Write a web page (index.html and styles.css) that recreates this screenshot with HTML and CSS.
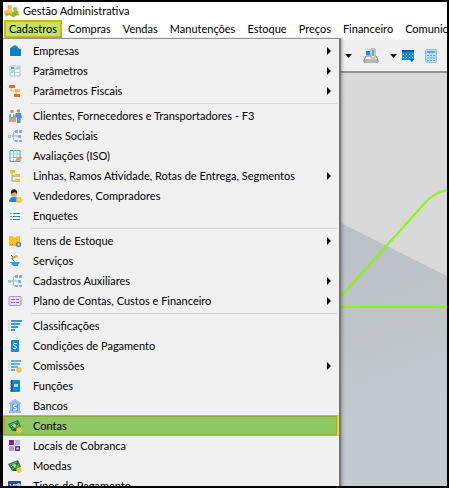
FILE: index.html
```html
<!DOCTYPE html>
<html lang="pt-BR">
<head>
<meta charset="utf-8">
<title>Gestão Administrativa</title>
<link rel="stylesheet" href="styles.css">
</head>
<body>
<div class="window">
  <header class="titlebar">
    <svg class="logo" viewBox="0 0 16 14" aria-hidden="true"><path d="m1 9 5-2 3 3 6-3v4l-5 3-4-3-4 2z" fill="#b3b52c"/><circle cx="6" cy="3" r="2.500" fill="#f0b25c"/><path d="m0 7 4-2h4l2 4-3 1-3-2-4 3z" fill="#f3c545"/><circle cx="12" cy="5" r="2.300" fill="#9bc34a"/><path d="m8 9 3-2h4l1 5-3-1-4 3z" fill="#8fba28"/></svg>
    <span>Gestão Administrativa</span>
  </header>
  <nav class="menubar">
    <button class="top open">Cadastros</button>
    <button class="top">Compras</button>
    <button class="top">Vendas</button>
    <button class="top">Manutenções</button>
    <button class="top">Estoque</button>
    <button class="top">Preços</button>
    <button class="top">Financeiro</button>
    <button class="top">Comunicação</button>
  </nav>
  <main class="workspace">
    <div class="toolbar">
      <button class="tool drop" aria-label="Opções"><svg width="7" height="4"><path d="M0 0h7L3.500 4z" fill="#111"/></svg></button>
      <button class="tool" aria-label="Caixa"><svg width="16" height="16" viewBox="0 0 16 16"><path d="M3 8h10l2 4v2H1v-2z" fill="#fff" stroke="#777"/><path d="M1 12h14" stroke="#777"/><path d="M8 1h4v9H8z" fill="#fff" stroke="#999"/><path d="M9 3h2M9 5h2M9 7h2" stroke="#333"/><path d="M3 3h4v4H3z" fill="#1494e8"/></svg></button>
      <button class="tool drop" aria-label="Opções da caixa"><svg width="7" height="4"><path d="M0 0h7L3.500 4z" fill="#111"/></svg></button>
      <button class="tool agenda" aria-label="Agenda"><svg width="12" height="13" viewBox="0 0 12 13"><path d="M0 1h12v10H0z" fill="#168ce0"/><path d="M0 1h12v2H0z" fill="#075e9f"/><path d="M1 5.500h10M1 8.500h10" stroke="#a8d8ff" stroke-dasharray="1 2"/><path d="M7 10h5l-2 3z" fill="#075e9f"/></svg></button>
      <button class="tool" aria-label="Calculadora"><svg width="12" height="14" viewBox="0 0 12 14"><rect x=".5" y=".5" width="11" height="13" rx="1" fill="#b9defa" stroke="#8cc2e8"/><path d="M2 2h8v2H2z" fill="#52aaea"/><path d="M2 6.500h8M2 9h8M2 11.500h8" stroke="#52aaea" stroke-dasharray="2 1"/></svg></button>
    </div>
    <svg class="backdrop" viewBox="0 0 444 413" preserveAspectRatio="xMinYMin slice" aria-hidden="true">
      <defs><linearGradient id="sky" x1="0" y1="0" x2=".4" y2="1"><stop offset="0" stop-color="#b5bec8"/><stop offset=".65" stop-color="#bac1c7"/><stop offset=".85" stop-color="#c0c4c8"/><stop offset="1" stop-color="#c3cacf"/></linearGradient></defs>
      <path d="M0 0h444v413H0z" fill="#d9d9d9"/>
      <path d="M0-19 444 203v210H0z" fill="url(#sky)"/>
      <path d="M332 230 421 131Q431 119 446 117M332 234h114" fill="none" stroke="#8af510" stroke-width="2"/>
    </svg>
  </main>
  <div class="popup">
    <ul class="group">
      <li><button class="item sub"><svg viewBox="0 0 14 14"><path d="M2 4 7 1l3 2v1l3 1v7H2z" fill="#1287d8"/><path d="M3 5h5M3 7h9M3 9h9M3 11h9" stroke="#0a5d9c" stroke-dasharray="1 1"/></svg>Empresas</button></li>
      <li><button class="item sub"><svg viewBox="0 0 14 14"><path d="M2 2h10v10H2z" fill="#fff" stroke="#9fc4dc"/><path d="M2 5h10M2 8.500h10M6.500 2v10" stroke="#b7d2e3"/><path d="M3 3h3v2H3z" fill="#46ac75"/><path d="M8 3h4v2H8zM3 6h3v2H3z" fill="#a6d7b8"/></svg>Parâmetros</button></li>
      <li><button class="item sub"><svg viewBox="0 0 14 14"><path d="M3 4v3h5v4" fill="none" stroke="#b9b9b9"/><path d="M1 1h6v3H1zM6 10h6v3H6z" fill="#ef6c28"/><path d="M7 5h5v3H7z" fill="#f4bd28"/></svg>Parâmetros Fiscais</button></li>
    </ul>
    <ul class="group">
      <li><button class="item"><svg viewBox="0 0 14 14"><circle cx="4" cy="2.500" r="1.800" fill="#c69265"/><circle cx="10.500" cy="2" r="1.800" fill="#c69265"/><path d="M1 5h5l2 3v5H1z" fill="#82b1b4"/><path d="M8 4h5l1 5h-1.500v5H9V9L7 7z" fill="#4f8fd5"/><path d="M3 9h5v4H3z" fill="#e29a75"/><path d="M3 5h2v3H3z" fill="#fff"/></svg>Clientes, Fornecedores e Transportadores - F3</button></li>
      <li><button class="item"><svg viewBox="0 0 14 14"><use href="#network"/></svg>Redes Sociais</button></li>
      <li><button class="item"><svg viewBox="0 0 14 14"><path d="M2 1.500h10v11H2z" fill="#fff" stroke="#46a5df"/><path d="M2 5h10M2 8.500h10M5.500 1v11M9 1v11" stroke="#8dc9ec"/><path d="m7 13 1-3 4-3 2 2-4 3z" fill="#ec9645"/></svg>Avaliações (ISO)</button></li>
      <li><button class="item sub"><svg viewBox="0 0 14 14"><path d="M4 3v9h5M4 7h5" fill="none" stroke="#8b9aab"/><path d="M2 1h5v3H2zM7 5h5v3H7zM7 10h5v3H7z" fill="#efc02d"/></svg>Linhas, Ramos Atividade, Rotas de Entrega, Segmentos</button></li>
      <li><button class="item"><svg viewBox="0 0 14 14"><path d="M1 13q0-5 5-5t5 5z" fill="#168bd2"/><circle cx="6" cy="5" r="3" fill="#e8a86c"/><path d="M3 5q-1-4 3-5 4 1 3 5L7 3z" fill="#272727"/><circle cx="11" cy="11" r="3" fill="#f6be32"/><path d="M11 9v2h1" fill="none" stroke="#fff1b0"/></svg>Vendedores, Compradores</button></li>
      <li><button class="item"><svg viewBox="0 0 14 14"><path d="M1 1h12v12H1z" fill="#fff"/><path d="M5 4.500h7M5 7.500h7M5 10.500h7" stroke="#2c83ad"/><path d="M2 4.500h2M2 7.500h2M2 10.500h2" stroke="#2abbc8"/></svg>Enquetes</button></li>
    </ul>
    <ul class="group">
      <li><button class="item sub"><svg viewBox="0 0 14 14"><path d="M1 2h3l3 2 2-2h3v10H1z" fill="#f2bf35"/><path d="M2 10h1v1H2zM4 10h1v1H4z" fill="#c08722"/><circle cx="10.500" cy="10.500" r="2" fill="#d8dde4" stroke="#68819c" stroke-width="1.500"/></svg>Itens de Estoque</button></li>
      <li><button class="item"><svg viewBox="0 0 14 14"><path d="m7 9-3-5 4-2M3 1l2 2" fill="none" stroke="#4d6780"/><path d="m4 4 5-3 1 2-5 2z" fill="#eda932"/><path d="M2 8h10l-2 3H4zM5 11h5v1H5z" fill="#2da3ea"/></svg>Serviços</button></li>
      <li><button class="item sub"><svg viewBox="0 0 14 14"><g id="network"><path d="M3 7h3m3-5H7Q5 2 5 7t2 5h3M5 7h5" fill="none" stroke="#8fb8da"/><path d="M0 6h3v3H0z" fill="#a7cea9"/><path d="M7 1h3v3H7zM11 1h3v3h-3zM10 6h3v3h-3zM7 11h3v2H7zM11 11h3v2h-3z" fill="#84aee9"/></g></svg>Cadastros Auxiliares</button></li>
      <li><button class="item sub"><svg viewBox="0 0 14 14"><rect x="1" y="2.500" width="12" height="9" rx="1" fill="#e7defb" stroke="#a796d8"/><path d="M3 5.500h4M3 8.500h4M8 5.500h3M8 8.500h3" stroke="#826dbd"/></svg>Plano de Contas, Custos e Financeiro</button></li>
    </ul>
    <ul class="group">
      <li><button class="item"><svg viewBox="0 0 14 14"><path d="M3 2h11M3 5h9M3 8h7M3 11h4" stroke="#4294d4" stroke-width="1.800"/><path d="M0 2h2M0 5h2M0 8h2M0 11h2" stroke="#9ac8ea"/></svg>Classificações</button></li>
      <li><button class="item"><svg viewBox="0 0 14 14"><rect x="3" y="1" width="8" height="12" rx="1" fill="#0f8edb"/><path d="M9 4.500H6q-2 2 1 2.500t1 2.500H5" fill="none" stroke="#fff"/></svg>Condições de Pagamento</button></li>
      <li><button class="item sub"><svg viewBox="0 0 14 14"><path d="M3 2h10M3 5h9M3 8h7M3 11h4" stroke="#4294d4" stroke-width="1.500"/><path d="M0 2h2M0 5h2M0 8h2M0 11h2" stroke="#9ac8ea"/><circle cx="11" cy="11" r="2.800" fill="#f3c44a"/></svg>Comissões</button></li>
      <li><button class="item"><svg viewBox="0 0 14 14"><rect x="3" y="1" width="9" height="12" rx="1" fill="#1488d7"/><path d="M3 1h2v12H3z" fill="#0968ad"/><path d="M6 5h4v3H6z" fill="#9bdcfc"/><path d="M2 3h2M2 6h2M2 9h2M2 12h2" stroke="#658"/></svg>Funções</button></li>
      <li><button class="item"><svg viewBox="0 0 14 14"><path d="M1 4 7 0l6 4v1H1zM2 5h10v8H2zM1 12h12v2H1z" fill="#91b9e9"/><path d="M4 5h6v7H4z" fill="#6797d5"/><path d="M9 6H6q-2 2 1 2.500t1 2.500H5" fill="none" stroke="#fff"/></svg>Bancos</button></li>
      <li><button class="item selected"><svg viewBox="0 0 14 14"><g id="cash"><path d="m0 5 10-4 3 7-9 4z" fill="#237a35"/><path d="m2 6 7-3M4 10l7-3M3 8l2-2M9 7l2-2" stroke="#80bd76"/><circle cx="6.500" cy="6.500" r="1.600" fill="#b5dda7"/><path d="m5 10 7-1v3H5z" fill="#185d29"/><circle cx="11" cy="11" r="2.700" fill="#f1c43d"/></g></svg>Contas</button></li>
      <li><button class="item"><svg viewBox="0 0 14 14"><path d="M1 1h5v5H1z" fill="#7f1ca8"/><path d="M7 1h5v5H7z" fill="#b9b8f1"/><path d="M1 7h5v5H1z" fill="#bd91dc"/><path d="M7 7h5v5H7z" fill="#582eaf"/><circle cx="9.500" cy="9.500" r="1.200" fill="#d8c7f4"/></svg>Locais de Cobranca</button></li>
      <li><button class="item"><svg viewBox="0 0 14 14"><use href="#cash"/></svg>Moedas</button></li>
      <li><button class="item"><svg viewBox="0 0 14 14"><rect x="0" y="2" width="13" height="10" rx="1" fill="#174f9b"/><path d="m2 5 2 4 2-4M7 5v4M9 9V5h3v2H9" fill="none" stroke="#fff"/></svg>Tipos de Pagamento</button></li>
    </ul>
  </div>
</div>
</body>
</html>
```
FILE: styles.css
```css
* { box-sizing: border-box; }
body { margin: 0; font: 11px/20px Lato, "Open Sans", sans-serif; color: #000; }
button { font: inherit; color: inherit; border: 0; background: none; padding: 0; margin: 0; }
ul { list-style: none; margin: 0; padding: 0; }
.window {
  position: relative;
  display: flex;
  flex-direction: column;
  height: 100vh;
  border: 2px solid #000;
  border-left-width: 3px;
  overflow: hidden;
  background: #fff;
}
.titlebar { display: flex; align-items: center; gap: 4px; height: 18px; flex: none; padding-left: 1px; }
.logo { width: 15px; height: 14px; }
.menubar { display: flex; flex: none; height: 18px; padding-left: 1px; white-space: nowrap; overflow: hidden; line-height: 18px; }
.top { flex: none; padding: 0 6px; }
.open { line-height: 14px; padding: 0 3px; border: 2px solid #cdb90e; background: #c5e263; }
.workspace { display: flex; flex: 1; flex-direction: column; min-height: 0; }
.toolbar {
  display: flex;
  align-items: center;
  justify-content: flex-end;
  gap: 11px;
  flex: none;
  height: 35px;
  padding-right: 10px;
  border-top: 2px solid #f7f7f7;
  border-bottom: 2px solid #929292;
  background: #f0f0f0;
}
.tool { display: flex; }
.agenda { margin-left: -6px; }
.backdrop { display: block; width: 100%; flex: 1; min-height: 0; }
.popup {
  position: absolute;
  z-index: 1;
  top: 36px;
  left: 0;
  width: 338px;
  padding-top: 2px;
  border-top: 1px solid #929292;
  border-right: 2px solid #74777a;
  background: #f1f1f1;
  box-shadow: 2px 0 2px #0003;
}
.group + .group::before { content: ""; display: block; height: 1px; margin: 2px 2px 2px 28px; background: #d5d5d5; }
.item {
  display: flex;
  align-items: center;
  gap: 11px;
  width: 100%;
  height: 20px;
  padding: 0 8px 0 5px;
  text-align: left;
  white-space: nowrap;
}
.item svg { width: 14px; height: 14px; flex: none; }
.sub::after { content: ""; margin-left: auto; border: 4px solid transparent; border-left-color: #000; border-right: 0; }
.selected {
  height: 21px;
  margin-top: -1px;
  padding: 0 6px 0 4px;
  border: 1px solid #d9b414;
  border-right: 2px solid #f5d52c;
  background: #8fc866;
  box-shadow: inset 0 0 0 1px #93ad2c;
}
```
